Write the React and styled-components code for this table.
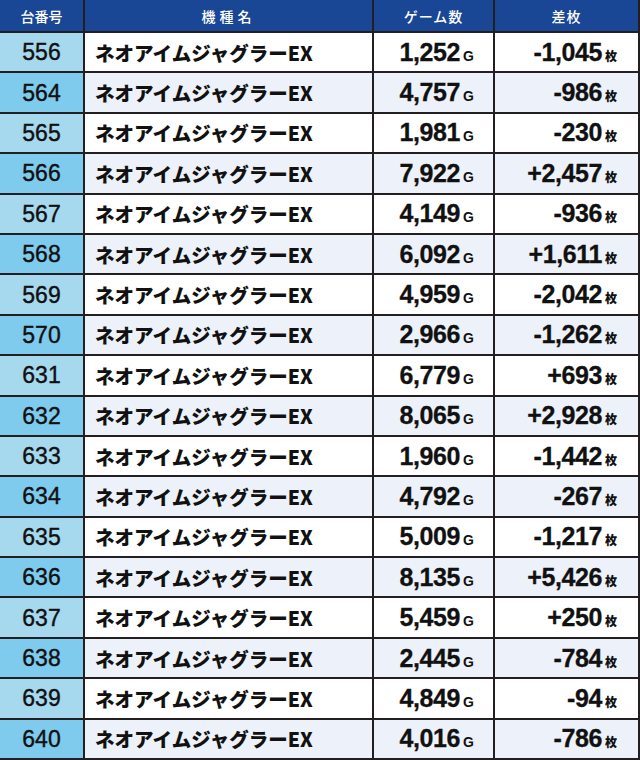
import React from "react";
import styled, { createGlobalStyle } from "styled-components";

const GlobalStyle = createGlobalStyle`
    html, body {
        margin: 0;
        padding: 0;
        background: #ffffff;
    }
    body {
        font-family: "Liberation Sans", "Noto Sans CJK JP", sans-serif;
    }
`

const rows = [
    ["556", "1,252", "-1,045"],
    ["564", "4,757", "-986"],
    ["565", "1,981", "-230"],
    ["566", "7,922", "+2,457"],
    ["567", "4,149", "-936"],
    ["568", "6,092", "+1,611"],
    ["569", "4,959", "-2,042"],
    ["570", "2,966", "-1,262"],
    ["631", "6,779", "+693"],
    ["632", "8,065", "+2,928"],
    ["633", "1,960", "-1,442"],
    ["634", "4,792", "-267"],
    ["635", "5,009", "-1,217"],
    ["636", "8,135", "+5,426"],
    ["637", "5,459", "+250"],
    ["638", "2,445", "-784"],
    ["639", "4,849", "-94"],
    ["640", "4,016", "-786"],
];

const Table = styled.div`
    display: grid;
    grid-template-columns: 83px 287px 119px 143px;
    grid-template-rows: 31px repeat(18, 1fr);
    gap: 2px;
    padding: 0 2px 2px 0;
    height: 760px;
    width: 640px;
    box-sizing: border-box;
    background-color: #231f20;
`

const HeadCell = styled.div`
    display: flex;
    align-items: center;
    justify-content: center;
    background-color: #1a4696;
    color: #ffffff;
    font-family: "Noto Sans CJK JP", sans-serif;
    font-weight: 500;
    font-size: 14px;
    letter-spacing: ${(p) => p.$spacing || "0px"};
`

const Cell = styled.div`
    display: flex;
    align-items: center;
    background-color: ${(p) => (p.$alt ? "#edf1f9" : "#ffffff")};
    color: #111111;
`

const NumberCell = styled(Cell)`
    justify-content: center;
    background-color: ${(p) => (p.$alt ? "#7ecbee" : "#a6d9ee")};
    font-family: "Liberation Sans", sans-serif;
    font-size: 23px;
    font-weight: 400;
    -webkit-text-stroke: 0.4px #111111;
    padding-top: 1px;
`

const NameCell = styled(Cell)`
    padding-left: 10px;
    font-family: "Noto Sans CJK JP", sans-serif;
    font-weight: 900;
    font-size: 19.5px;
    letter-spacing: 0px;
`

const ValueCell = styled(Cell)`
    justify-content: flex-end;
    padding-right: ${(p) => p.$pad};
`

const Figure = styled.span`
    white-space: nowrap;
    line-height: 1;
`

const Value = styled.span`
    font-family: "Liberation Sans", sans-serif;
    font-weight: 700;
    font-size: 25px;
    letter-spacing: -0.4px;
    -webkit-text-stroke: 0.3px #111111;
`

const Unit = styled.span`
    margin-left: 3px;
    font-family: ${(p) => (p.$kanji ? '"Noto Sans CJK JP", sans-serif' : '"Liberation Sans", sans-serif')};
    font-weight: ${(p) => (p.$kanji ? 900 : 700)};
    font-size: ${(p) => (p.$kanji ? "12px" : "14px")};
`

export default function App() {
    return (
        <>
            <GlobalStyle />
            <Table>
                <HeadCell>台番号</HeadCell>
                <HeadCell $spacing="4px">機種名</HeadCell>
                <HeadCell $spacing="1px">ゲーム数</HeadCell>
                <HeadCell $spacing="1px">差枚</HeadCell>
                {rows.map(([no, games, diff], i) => {
                    const alt = i % 2 === 1;
                    return (
                        <React.Fragment key={no}>
                            <NumberCell $alt={alt}>{no}</NumberCell>
                            <NameCell $alt={alt}>ネオアイムジャグラーEX</NameCell>
                            <ValueCell $alt={alt} $pad="19px">
                                <Figure>
                                    <Value>{games}</Value>
                                    <Unit>G</Unit>
                                </Figure>
                            </ValueCell>
                            <ValueCell $alt={alt} $pad="21px">
                                <Figure>
                                    <Value>{diff}</Value>
                                    <Unit $kanji>枚</Unit>
                                </Figure>
                            </ValueCell>
                        </React.Fragment>
                    );
                })}
            </Table>
        </>
    );
}
